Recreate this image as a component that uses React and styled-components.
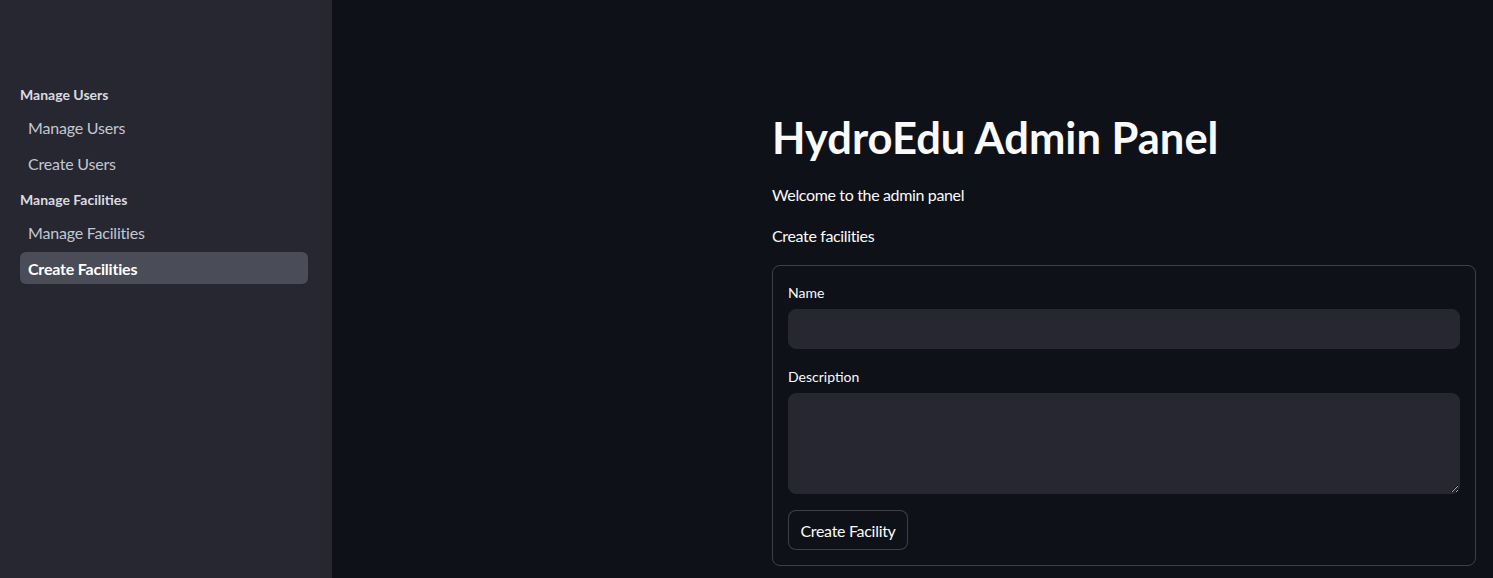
import styled, { createGlobalStyle } from "styled-components";

const GlobalStyle = createGlobalStyle`
  html, body {
    margin: 0;
    padding: 0;
    background: #0e1117;
    font-family: Lato, "Noto Sans", sans-serif;
    color: #fafafa;
  }
  * { box-sizing: border-box; }
`;

const Page = styled.div`
  display: flex;
  height: 100vh;
  overflow: hidden;
`;

const Sidebar = styled.nav`
  width: 332px;
  flex-shrink: 0;
  background: #262730;
  padding-top: 85px;
  display: flex;
  flex-direction: column;
`;

const SectionTitle = styled.div`
  font-size: 14px;
  line-height: 20px;
  font-weight: 700;
  color: #d9dbe0;
  padding: 0 20px;
  margin: ${(p) => (p.$first ? "0" : "9px")} 0 4px;
`;

const NavItem = styled.a`
  display: flex;
  align-items: center;
  height: 32px;
  margin: 2px 24px 2px 20px;
  padding: 0 8px;
  border-radius: 6px;
  font-size: 16px;
  letter-spacing: -0.2px;
  text-decoration: none;
  color: ${(p) => (p.$active ? "#ffffff" : "#c3c7d1")};
  font-weight: ${(p) => (p.$active ? 700 : 400)};
  background: ${(p) => (p.$active ? "#4a4c57" : "transparent")};
  cursor: pointer;
`;

const Main = styled.main`
  flex: 1;
  padding: 111px 0 0 440px;
`;

const Content = styled.div`
  width: 704px;
  display: flex;
  flex-direction: column;
  gap: 16px;
`;

const Title = styled.h1`
  margin: 0 0 3px;
  font-size: 43.5px;
  line-height: 53px;
  font-weight: 700;
  color: #fafafa;
`;

const Text = styled.p`
  margin: 0 0 1px;
  font-size: 16px;
  line-height: 24px;
  letter-spacing: -0.35px;
`;

const Form = styled.form`
  border: 1px solid rgba(250, 250, 250, 0.2);
  border-radius: 8px;
  padding: 15px;
  display: flex;
  flex-direction: column;
  gap: 16px;
`;

const Field = styled.div`
  display: flex;
  flex-direction: column;
`;

const Label = styled.label`
  font-size: 14px;
  line-height: 24px;
  margin-bottom: 4px;
  color: #fafafa;
`;

const Input = styled.input`
  height: 40px;
  border: 1px solid #262730;
  border-radius: 8px;
  background: #262730;
  color: #fafafa;
  padding: 0 12px;
  font: inherit;
  outline: none;
`;

const TextArea = styled.textarea`
  height: 101px;
  border: 1px solid #262730;
  border-radius: 8px;
  background: #262730;
  color: #fafafa;
  padding: 12px;
  font: inherit;
  outline: none;
  resize: vertical;
  color-scheme: dark;
`;

const Button = styled.button`
  align-self: flex-start;
  height: 40px;
  width: 120px;
  border: 1px solid rgba(250, 250, 250, 0.2);
  border-radius: 8px;
  background: #0e1117;
  color: #fafafa;
  font-family: inherit;
  font-size: 16px;
  letter-spacing: -0.3px;
  cursor: pointer;
`;

const App = () => {
  return (
    <Page>
      <GlobalStyle />
      <Sidebar>
        <SectionTitle $first>Manage Users</SectionTitle>
        <NavItem>Manage Users</NavItem>
        <NavItem>Create Users</NavItem>
        <SectionTitle>Manage Facilities</SectionTitle>
        <NavItem>Manage Facilities</NavItem>
        <NavItem $active>Create Facilities</NavItem>
      </Sidebar>
      <Main>
        <Content>
          <Title>HydroEdu Admin Panel</Title>
          <Text>Welcome to the admin panel</Text>
          <Text>Create facilities</Text>
          <Form onSubmit={(e) => e.preventDefault()}>
            <Field>
              <Label>Name</Label>
              <Input type="text" />
            </Field>
            <Field>
              <Label>Description</Label>
              <TextArea />
            </Field>
            <Button type="submit">Create Facility</Button>
          </Form>
        </Content>
      </Main>
    </Page>
  );
};

export default App;
